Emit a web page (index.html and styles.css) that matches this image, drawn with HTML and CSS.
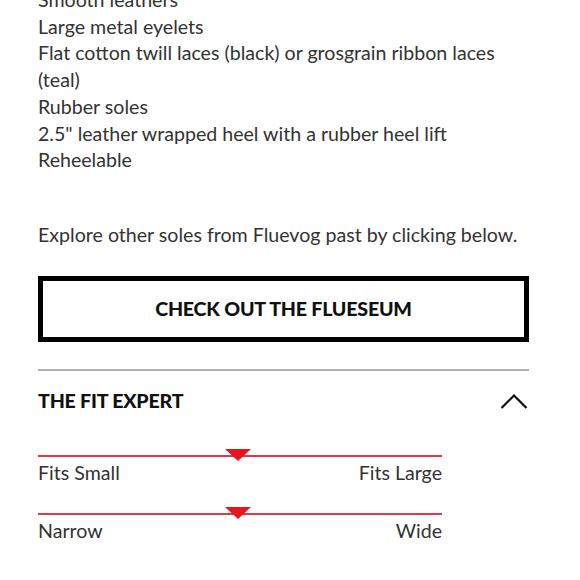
FILE: index.html
```html
<!DOCTYPE html>
<html>
<head>
<meta charset="utf-8">
<link rel="stylesheet" href="styles.css">
</head>
<body>
<div class="page">
  <ul class="features">
    <li>Smooth leathers</li>
    <li>Large metal eyelets</li>
    <li>Flat cotton twill laces (black) or grosgrain ribbon laces (teal)</li>
    <li>Rubber soles</li>
    <li>2.5" leather wrapped heel with a rubber heel lift</li>
    <li>Reheelable</li>
  </ul>
  <p class="explore">Explore other soles from Fluevog past by clicking below.</p>
  <a class="btn">CHECK OUT THE FLUESEUM</a>
  <div class="divider"></div>
  <div class="fit-header">
    <h2 class="fit-title">THE FIT EXPERT</h2>
    <svg class="chevron" width="28" height="16" viewBox="0 0 28 16"><polyline points="1.5,15 14,2.5 26.5,15" fill="none" stroke="#111" stroke-width="2.2"/></svg>
  </div>
  <div class="slider slider-first">
    <div class="track"><span class="marker" style="left:49.5%"></span></div>
    <div class="labels"><span>Fits Small</span><span>Fits Large</span></div>
  </div>
  <div class="slider">
    <div class="track"><span class="marker" style="left:49.5%"></span></div>
    <div class="labels"><span>Narrow</span><span>Wide</span></div>
  </div>
</div>
</body>
</html>
```
FILE: styles.css
```css
html, body {
  margin: 0;
  padding: 0;
  background: #fff;
}
body {
  font-family: Lato, "Open Sans", sans-serif;
  color: #333;
  font-size: 19.6px;
}
.page {
  width: 491px;
  margin-left: 38px;
}
.features {
  list-style: none;
  margin: -13px 0 0 0;
  padding: 0;
  line-height: 26.7px;
}
.explore {
  margin: 48px 0 0 0;
  line-height: 26.7px;
}
.btn {
  margin-top: 27px;
  height: 66px;
  box-sizing: border-box;
  border: 5px solid #000;
  display: flex;
  align-items: center;
  justify-content: center;
  font-weight: 900;
  font-size: 19.6px;
  color: #111;
  letter-spacing: -0.2px;
}
.divider {
  margin-top: 27px;
  border-top: 2px solid #b0b0b0;
}
.fit-header {
  height: 60px;
  display: flex;
  align-items: center;
  justify-content: space-between;
}
.fit-title {
  margin: 0;
  font-size: 19.6px;
  font-weight: 900;
  color: #111;
  letter-spacing: -0.2px;
}
.chevron {
  display: block;
  margin-right: 1px;
}
.slider {
  width: 404px;
  margin-top: 28px;
}
.slider-first {
  margin-top: 24px;
}
.track {
  position: relative;
  height: 2px;
  background: #e03a44;
}
.marker {
  position: absolute;
  top: -6px;
  width: 0;
  height: 0;
  margin-left: -13px;
  border-left: 13px solid transparent;
  border-right: 13px solid transparent;
  border-top: 12px solid #e8141e;
}
.labels {
  display: flex;
  justify-content: space-between;
  margin-top: 4px;
  line-height: 24px;
}
```
